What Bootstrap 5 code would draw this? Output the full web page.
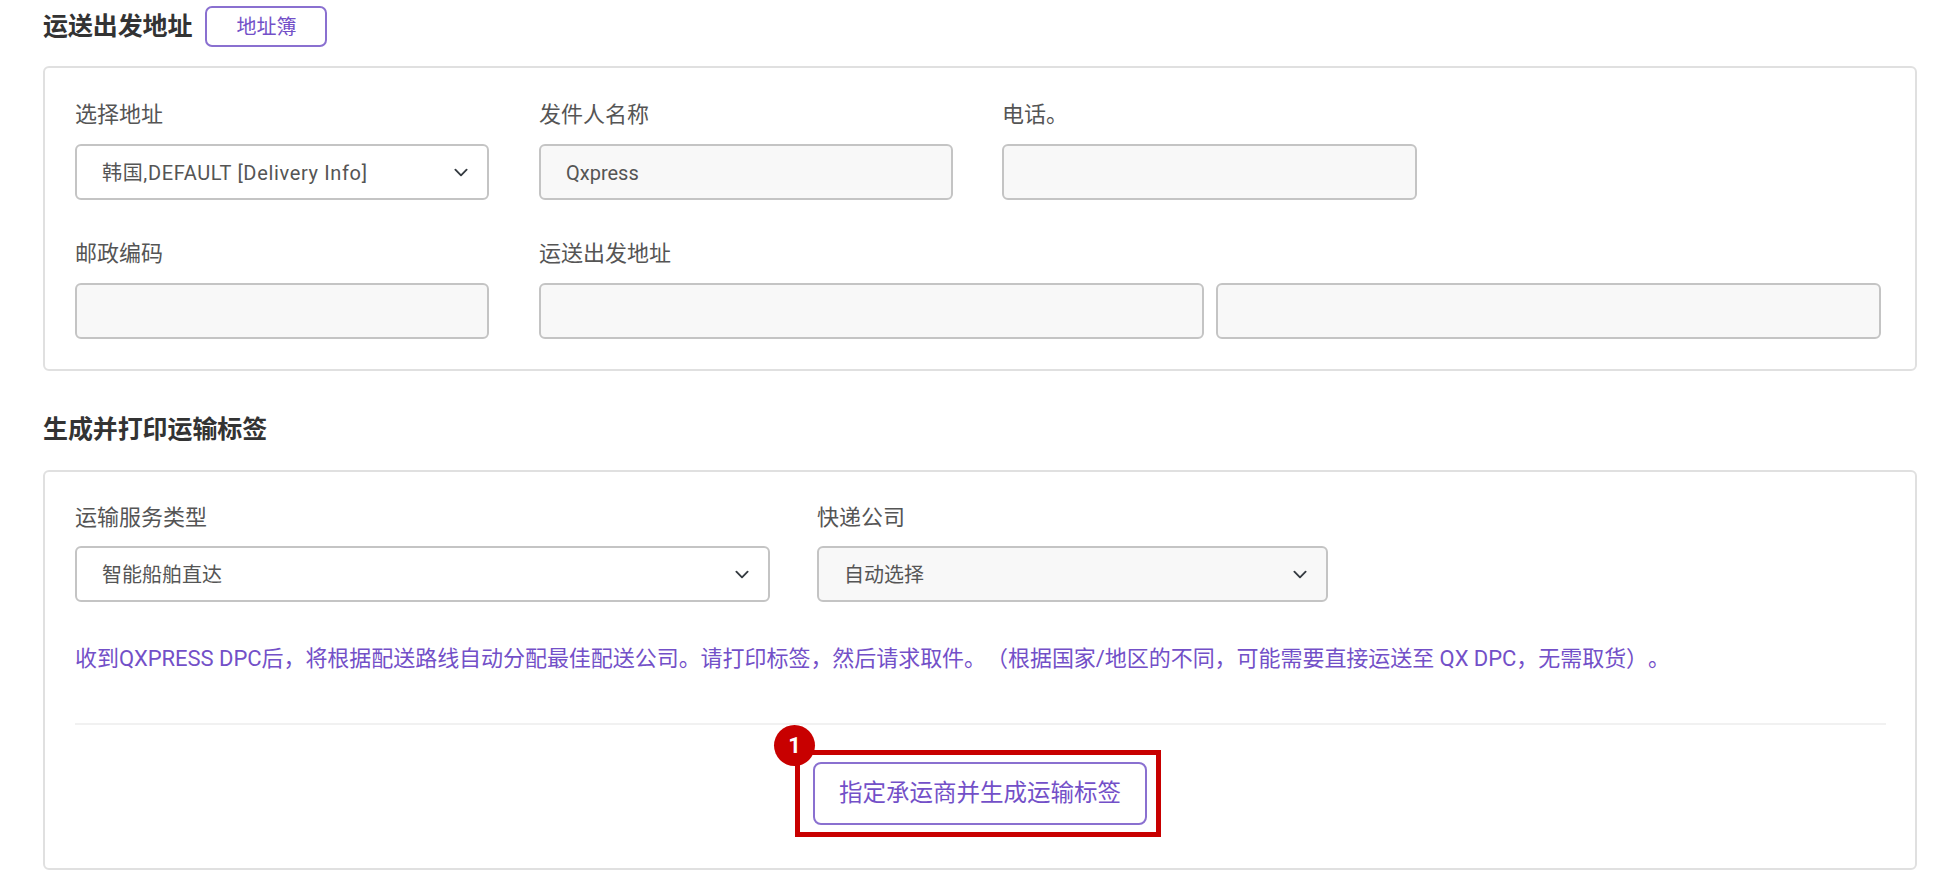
<!DOCTYPE html>
<html lang="zh">
<head>
<meta charset="utf-8">
<title>运送出发地址</title>
<link rel="stylesheet" href="https://cdn.jsdelivr.net/npm/bootstrap@5.3.0/dist/css/bootstrap.min.css">
<style>
html,body{height:871px;overflow:hidden;}
body{background:#fff;color:#555;font-family:Roboto,"Noto Sans CJK SC",sans-serif;padding:6px 21px 0 43px;}
.sec-head{height:41px;gap:13px;margin-bottom:19px;}
.sec-title{font-size:25px;font-weight:700;color:#333;margin:0;line-height:41px;letter-spacing:-.1px;}
.title-two{margin:38px 0 20px;}
.book-btn{width:122px;height:41px;padding:0;font-size:20px;line-height:1;color:#7350c8;border:2px solid #8a70d0;border-radius:7px;background:#fff;}
.panel{border:2px solid #e0e0e0;border-radius:6px;background:#fff;padding:31px 30px 0;}
.panel-one{height:305px;}
.panel-two{height:400px;padding-top:30px;}
.field-label{display:block;font-size:22px;line-height:32px;color:#555;margin:0 0 13px;}
.panel-two .field-label{margin-bottom:12px;}
.field-row{display:flex;}
.field-a{width:414px;margin-right:50px;}
.field-b{width:414px;margin-right:49px;}
.field-c{width:415px;}
.field-d{flex:0 0 auto;width:1342px;}
.field-e{width:695px;margin-right:47px;}
.field-f{width:511px;}
.pair{display:flex;gap:12px;}
.pair .form-control{width:665px;}
.row-gap{margin-top:38px;}
.form-control,.form-select{height:56px;font-size:20px;color:#555;border:2px solid #c4c4c4;border-radius:6px;padding:2px 25px 0;line-height:50px;box-shadow:none;}
.form-control[readonly],.filled{background-color:#f8f8f8;}
.form-select{background-position:right 16px center;background-size:20px 15px;}
.wide-text{letter-spacing:.65px;}
.hint{font-size:22px;line-height:32px;color:#7350c8;margin:41px 0 0;white-space:nowrap;text-spacing-trim:space-all;letter-spacing:-.045px;}
.sep{height:2px;background:#f1f1f1;margin:48px 0 0;width:1811px;}
.action-wrap{position:relative;width:334px;margin:37px auto 0;}
.action-btn{width:334px;height:63px;padding:0;font-size:23.5px;line-height:1;color:#7350c8;border:2px solid #8a70d0;border-radius:8px;background:#fff;}
.mark-box{position:absolute;left:-18px;top:-12px;width:366px;height:87px;border:5px solid #c80000;pointer-events:none;}
.mark-dot{position:absolute;left:-39px;top:-37px;width:41px;height:41px;border-radius:50%;background:#c80000;color:#fff;font-size:22px;font-weight:700;line-height:41px;text-align:center;}
</style>
</head>
<body>
<div class="d-flex align-items-center sec-head">
  <h2 class="sec-title">运送出发地址</h2>
  <button type="button" class="btn book-btn">地址簿</button>
</div>
<div class="panel panel-one">
  <div class="field-row">
    <div class="field-a">
      <label class="field-label">选择地址</label>
      <select class="form-select wide-text"><option>韩国,DEFAULT [Delivery Info]</option></select>
    </div>
    <div class="field-b">
      <label class="field-label">发件人名称</label>
      <input class="form-control" readonly value="Qxpress">
    </div>
    <div class="field-c">
      <label class="field-label">电话。</label>
      <input class="form-control" readonly>
    </div>
  </div>
  <div class="field-row row-gap">
    <div class="field-a">
      <label class="field-label">邮政编码</label>
      <input class="form-control" readonly>
    </div>
    <div class="field-d">
      <label class="field-label">运送出发地址</label>
      <div class="pair">
        <input class="form-control" readonly>
        <input class="form-control" readonly>
      </div>
    </div>
  </div>
</div>
<h2 class="sec-title title-two">生成并打印运输标签</h2>
<div class="panel panel-two">
  <div class="field-row">
    <div class="field-e">
      <label class="field-label">运输服务类型</label>
      <select class="form-select"><option>智能船舶直达</option></select>
    </div>
    <div class="field-f">
      <label class="field-label">快递公司</label>
      <select class="form-select filled"><option>自动选择</option></select>
    </div>
  </div>
  <p class="hint">收到QXPRESS DPC后，将根据配送路线自动分配最佳配送公司。请打印标签，然后请求取件。（根据国家/地区的不同，可能需要直接运送至 QX DPC，无需取货）。</p>
  <div class="sep"></div>
  <div class="action-wrap">
    <button type="button" class="btn action-btn">指定承运商并生成运输标签</button>
    <div class="mark-box"></div>
    <div class="mark-dot">1</div>
  </div>
</div>
</body>
</html>
